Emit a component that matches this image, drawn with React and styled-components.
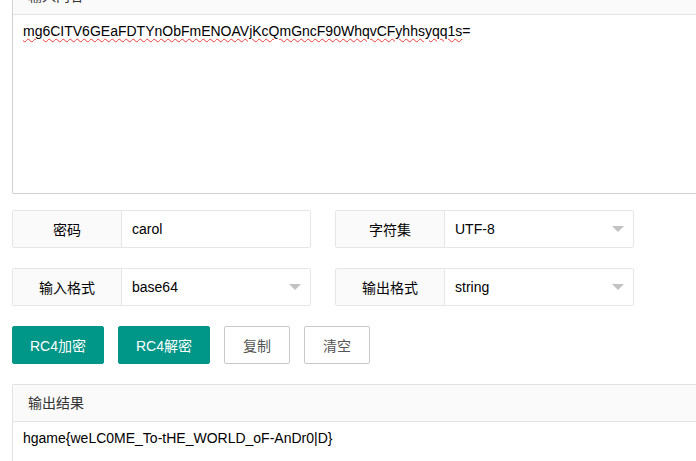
import React from 'react'
import styled, { createGlobalStyle } from 'styled-components'

const GlobalStyle = createGlobalStyle`
    html, body{
        margin: 0;
        padding: 0;
        overflow: hidden;
        background: #fff;
    }
    body{
        font-family: "Liberation Sans", "Noto Sans CJK SC", sans-serif;
        font-size: 14px;
        color: #333;
    }
`;

const fields = [
    [
        { label: '密码', value: 'carol' },
        { label: '字符集', value: 'UTF-8', select: true },
    ],
    [
        { label: '输入格式', value: 'base64', select: true },
        { label: '输出格式', value: 'string', select: true },
    ],
]

function App(){
    return(
        <>
            <GlobalStyle />
            <PageStyled>
                <Panel border="#d2d2d2">
                    <PanelHeader>输入内容</PanelHeader>
                    <TextBox height="178px">
                        <Misspelled>mg6CITV6GEaFDTYnObFmENOAVjKcQmGncF90WhqvCFyhhsyqq1s</Misspelled>=
                    </TextBox>
                </Panel>

                {fields.map((row, i) => (
                    <FormRow key={i}>
                        {row.map((f) => (
                            <InputGroup key={f.label}>
                                <Label>{f.label}</Label>
                                <Field>
                                    {f.value}
                                    {f.select && <Caret />}
                                </Field>
                            </InputGroup>
                        ))}
                    </FormRow>
                ))}

                <ButtonRow>
                    <Button primary>RC4加密</Button>
                    <Button primary>RC4解密</Button>
                    <Button>复制</Button>
                    <Button>清空</Button>
                </ButtonRow>

                <Panel border="#e2e2e2">
                    <PanelHeader>输出结果</PanelHeader>
                    <TextBox height="60px">hgame{'{'}weLC0ME_To-tHE_WORLD_oF-AnDr0|D{'}'}</TextBox>
                </Panel>
            </PageStyled>
        </>
    )
}

const PageStyled = styled.div`
    width: 740px;
    margin-top: -23px;
    padding-left: 12px;
    box-sizing: border-box;
`;

const Panel = styled.div`
    border: 1px solid ${props => props.border};
    border-right: none;
    border-radius: 2px 0 0 2px;
    background: #fff;
`;

const PanelHeader = styled.div`
    height: 36px;
    line-height: 36px;
    padding: 0 15px;
    background: #fafafa;
    border-bottom: 1px solid #e2e2e2;
    color: #333;
`;

const TextBox = styled.div`
    height: ${props => props.height};
    padding: 6px 10px;
    line-height: 20px;
    box-sizing: border-box;
    color: #000;
    white-space: nowrap;
`;

const Misspelled = styled.span`
    text-decoration: underline wavy #f03c3c;
    text-decoration-thickness: 1px;
    text-underline-offset: 2px;
`;

const FormRow = styled.div`
    display: flex;
    gap: 24px;
    margin-top: 16px;
    & + &{
        margin-top: 20px;
    }
`;

const InputGroup = styled.div`
    display: flex;
    width: 299px;
    height: 38px;
    border: 1px solid #e6e6e6;
    border-radius: 2px;
    box-sizing: border-box;
`;

const Label = styled.div`
    width: 108px;
    flex-shrink: 0;
    background: #fafafa;
    border-right: 1px solid #e6e6e6;
    display: flex;
    align-items: center;
    justify-content: center;
    color: #000;
`;

const Field = styled.div`
    flex: 1;
    position: relative;
    display: flex;
    align-items: center;
    padding-left: 10px;
    color: #000;
`;

const Caret = styled.span`
    position: absolute;
    right: 9px;
    top: 15px;
    width: 0;
    height: 0;
    border-left: 6px solid transparent;
    border-right: 6px solid transparent;
    border-top: 6px solid #c2c2c2;
`;

const ButtonRow = styled.div`
    display: flex;
    gap: 14px;
    margin: 20px 0;
`;

const Button = styled.button`
    width: ${props => props.primary ? '92px' : '66px'};
    height: 38px;
    padding: 0;
    font-family: inherit;
    font-size: 14px;
    border-radius: 2px;
    cursor: pointer;
    background: ${props => props.primary ? '#009688' : '#fff'};
    color: ${props => props.primary ? '#fff' : '#555'};
    border: 1px solid ${props => props.primary ? '#009688' : '#c9c9c9'};
`;

export default App
